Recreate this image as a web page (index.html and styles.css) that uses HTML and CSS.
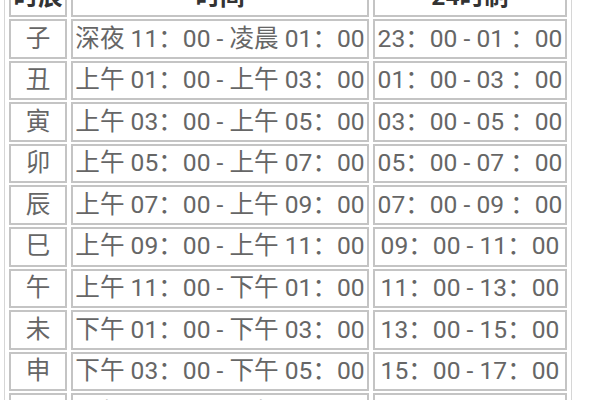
FILE: index.html
```html
<!DOCTYPE html>
<html lang="zh">
<head>
<meta charset="utf-8">
<link rel="stylesheet" href="styles.css">
</head>
<body>
<table class="shichen">
  <tr class="head"><th class="c1">时辰</th><th class="c2">时间</th><th class="c3">24时制</th></tr>
  <tr><td class="c1">子</td><td class="c2">深夜 11：00 - 凌晨 01：00</td><td class="c3">23：00 - 01 ：00</td></tr>
  <tr><td class="c1">丑</td><td class="c2">上午 01：00 - 上午 03：00</td><td class="c3">01：00 - 03 ：00</td></tr>
  <tr><td class="c1">寅</td><td class="c2">上午 03：00 - 上午 05：00</td><td class="c3">03：00 - 05 ：00</td></tr>
  <tr><td class="c1">卯</td><td class="c2">上午 05：00 - 上午 07：00</td><td class="c3">05：00 - 07 ：00</td></tr>
  <tr><td class="c1">辰</td><td class="c2">上午 07：00 - 上午 09：00</td><td class="c3">07：00 - 09 ：00</td></tr>
  <tr><td class="c1">巳</td><td class="c2">上午 09：00 - 上午 11：00</td><td class="c3">09：00 - 11：00</td></tr>
  <tr><td class="c1">午</td><td class="c2">上午 11：00 - 下午 01：00</td><td class="c3">11：00 - 13：00</td></tr>
  <tr><td class="c1">未</td><td class="c2">下午 01：00 - 下午 03：00</td><td class="c3">13：00 - 15：00</td></tr>
  <tr><td class="c1">申</td><td class="c2">下午 03：00 - 下午 05：00</td><td class="c3">15：00 - 17：00</td></tr>
  <tr><td class="c1">酉</td><td class="c2">下午 05：00 - 下午 07：00</td><td class="c3">17：00 - 19：00</td></tr>
</table>
</body>
</html>
```
FILE: styles.css
```css
html, body {
  margin: 0;
  padding: 0;
  background: #ffffff;
  overflow: hidden;
  width: 600px;
  height: 400px;
}
.shichen {
  margin: -25.6px 0 0 4px;
  width: 568px;
  table-layout: fixed;
  border: 1px solid #d6d6d6;
  border-spacing: 4px 2px;
  border-collapse: separate;
  font-family: Roboto, "Noto Sans CJK SC", sans-serif;
  font-size: 24.6px;
  color: #666666;
}
.shichen th,
.shichen td {
  box-sizing: border-box;
  height: 39.6px;
  padding: 0;
  border: 2px solid #c4c4c4;
  text-align: center;
  vertical-align: middle;
  white-space: nowrap;
  line-height: 1;
}
.shichen th {
  color: #333333;
  font-weight: bold;
}
.c1 { width: 58px; }
.c2 { width: 298px; }
.c3 { width: 194px; }
```
